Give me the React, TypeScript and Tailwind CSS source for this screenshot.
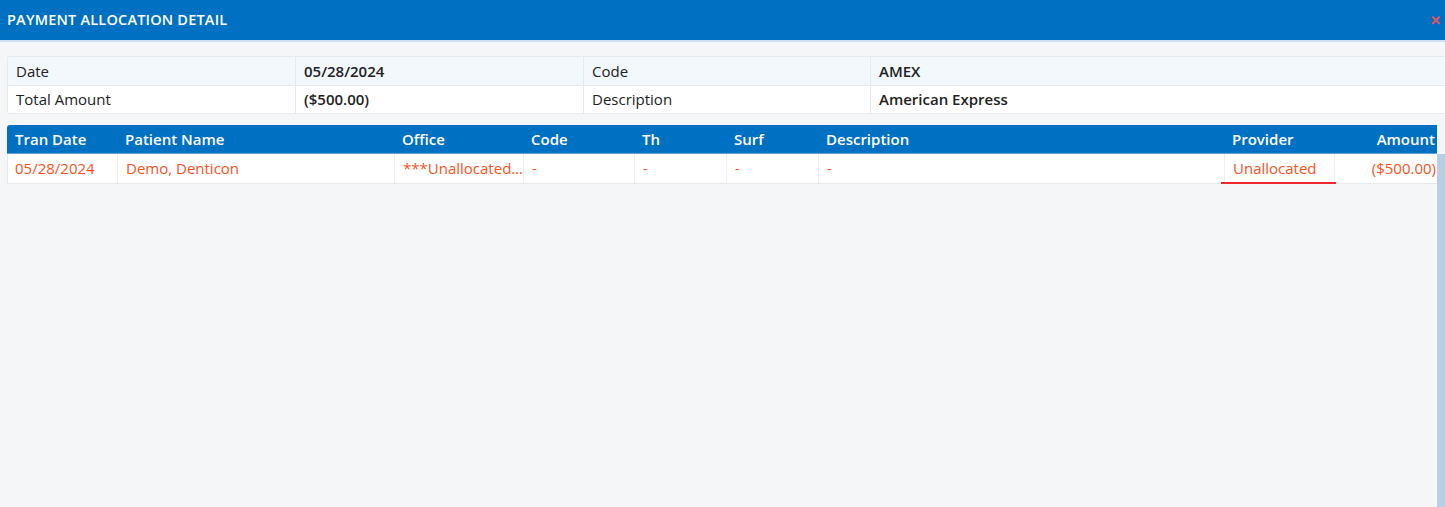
import React from "react";

interface AllocRow {
  tranDate: string;
  patient: string;
  office: string;
  code: string;
  th: string;
  surf: string;
  description: string;
  provider: string;
  amount: string;
}

const rows: AllocRow[] = [
  {
    tranDate: "05/28/2024",
    patient: "Demo, Denticon",
    office: "***Unallocated***",
    code: "-",
    th: "-",
    surf: "-",
    description: "-",
    provider: "Unallocated",
    amount: "($500.00)",
  },
];

const PaymentAllocationDetail: React.FC = () => {
  return (
    <div
      className="h-[507px] w-[1445px] overflow-hidden bg-[#f5f6f8] text-[15px] text-[#222]"
      style={{ fontFamily: '"Open Sans", "Liberation Sans", sans-serif' }}
    >
      {/* Title bar */}
      <div className="flex h-[42px] items-center justify-between border-b-2 border-[#cfe0f1] bg-[#0070c3] pl-[7px] pr-[4px]">
        <span className="text-[14.5px] font-semibold tracking-[0.2px] text-white">PAYMENT ALLOCATION DETAIL</span>
        <button className="text-[13px] font-bold leading-none text-[#f0505a]">✕</button>
      </div>

      {/* Summary table */}
      <div className="ml-[7px] mt-[14px] overflow-hidden rounded-l-[3px] border border-r-0 border-[#e6e9ee]">
        <div className="grid h-[28px] grid-cols-[288px_288px_287px_1fr] bg-[#f3f8fd]">
          <div className="flex items-center border-r border-[#e6e9ee] pl-[8px]">Date</div>
          <div className="flex items-center border-r border-[#e6e9ee] pl-[8px] font-semibold">05/28/2024</div>
          <div className="flex items-center border-r border-[#e6e9ee] pl-[8px]">Code</div>
          <div className="flex items-center pl-[8px] font-semibold">AMEX</div>
        </div>
        <div className="grid h-[28px] grid-cols-[288px_288px_287px_1fr] border-t border-[#e6e9ee] bg-white">
          <div className="flex items-center border-r border-[#e6e9ee] pl-[8px]">Total Amount</div>
          <div className="flex items-center border-r border-[#e6e9ee] pl-[8px] font-semibold">($500.00)</div>
          <div className="flex items-center border-r border-[#e6e9ee] pl-[8px]">Description</div>
          <div className="flex items-center pl-[8px] font-semibold">American Express</div>
        </div>
      </div>

      {/* Allocation grid */}
      <div className="ml-[7px] mt-[11px] flex">
        <div className="w-[1430px]">
          <div className="grid h-[29px] grid-cols-[110px_277px_129px_111px_92px_92px_406px_110px_103px] rounded-tl-[3px] border-b border-[#5d9fd8] bg-[#0070c3] font-semibold text-white">
            <div className="flex items-center pl-[8px]">Tran Date</div>
            <div className="flex items-center pl-[8px]">Patient Name</div>
            <div className="flex items-center pl-[8px]">Office</div>
            <div className="flex items-center pl-[8px]">Code</div>
            <div className="flex items-center pl-[8px]">Th</div>
            <div className="flex items-center pl-[8px]">Surf</div>
            <div className="flex items-center pl-[8px]">Description</div>
            <div className="flex items-center pl-[8px]">Provider</div>
            <div className="flex items-center justify-end pr-[2px]">Amount</div>
          </div>
          {rows.map((r) => (
            <div
              key={r.tranDate + r.patient}
              className="grid h-[30px] grid-cols-[110px_277px_129px_111px_92px_92px_406px_110px_103px] border-b border-l border-[#e6e9ee] bg-white text-[#f5541e]"
            >
              <div className="flex items-center border-r border-[#eceef2] pl-[7px]">{r.tranDate}</div>
              <div className="flex items-center border-r border-[#eceef2] pl-[8px]">{r.patient}</div>
              <div className="flex items-center overflow-hidden border-r border-[#eceef2] pl-[8px]">
                <span className="truncate">***Unallocated...</span>
              </div>
              <div className="flex items-center border-r border-[#eceef2] pl-[8px]">{r.code}</div>
              <div className="flex items-center border-r border-[#eceef2] pl-[8px]">{r.th}</div>
              <div className="flex items-center border-r border-[#eceef2] pl-[8px]">{r.surf}</div>
              <div className="flex items-center border-r border-[#eceef2] pl-[8px]">{r.description}</div>
              <div className="relative flex items-center border-r border-[#eceef2] pl-[8px]">
                {r.provider}
                <div className="absolute bottom-[-1px] left-[-4px] h-[2px] w-[115px] bg-[#f0272b]" />
              </div>
              <div className="flex items-center justify-end pr-[2px]">{r.amount}</div>
            </div>
          ))}
        </div>
        <div className="mt-[29px] h-[360px] w-[8px] bg-[#b9cfe1]" />
      </div>
    </div>
  );
};

export default function App() {
  return <PaymentAllocationDetail />;
}
